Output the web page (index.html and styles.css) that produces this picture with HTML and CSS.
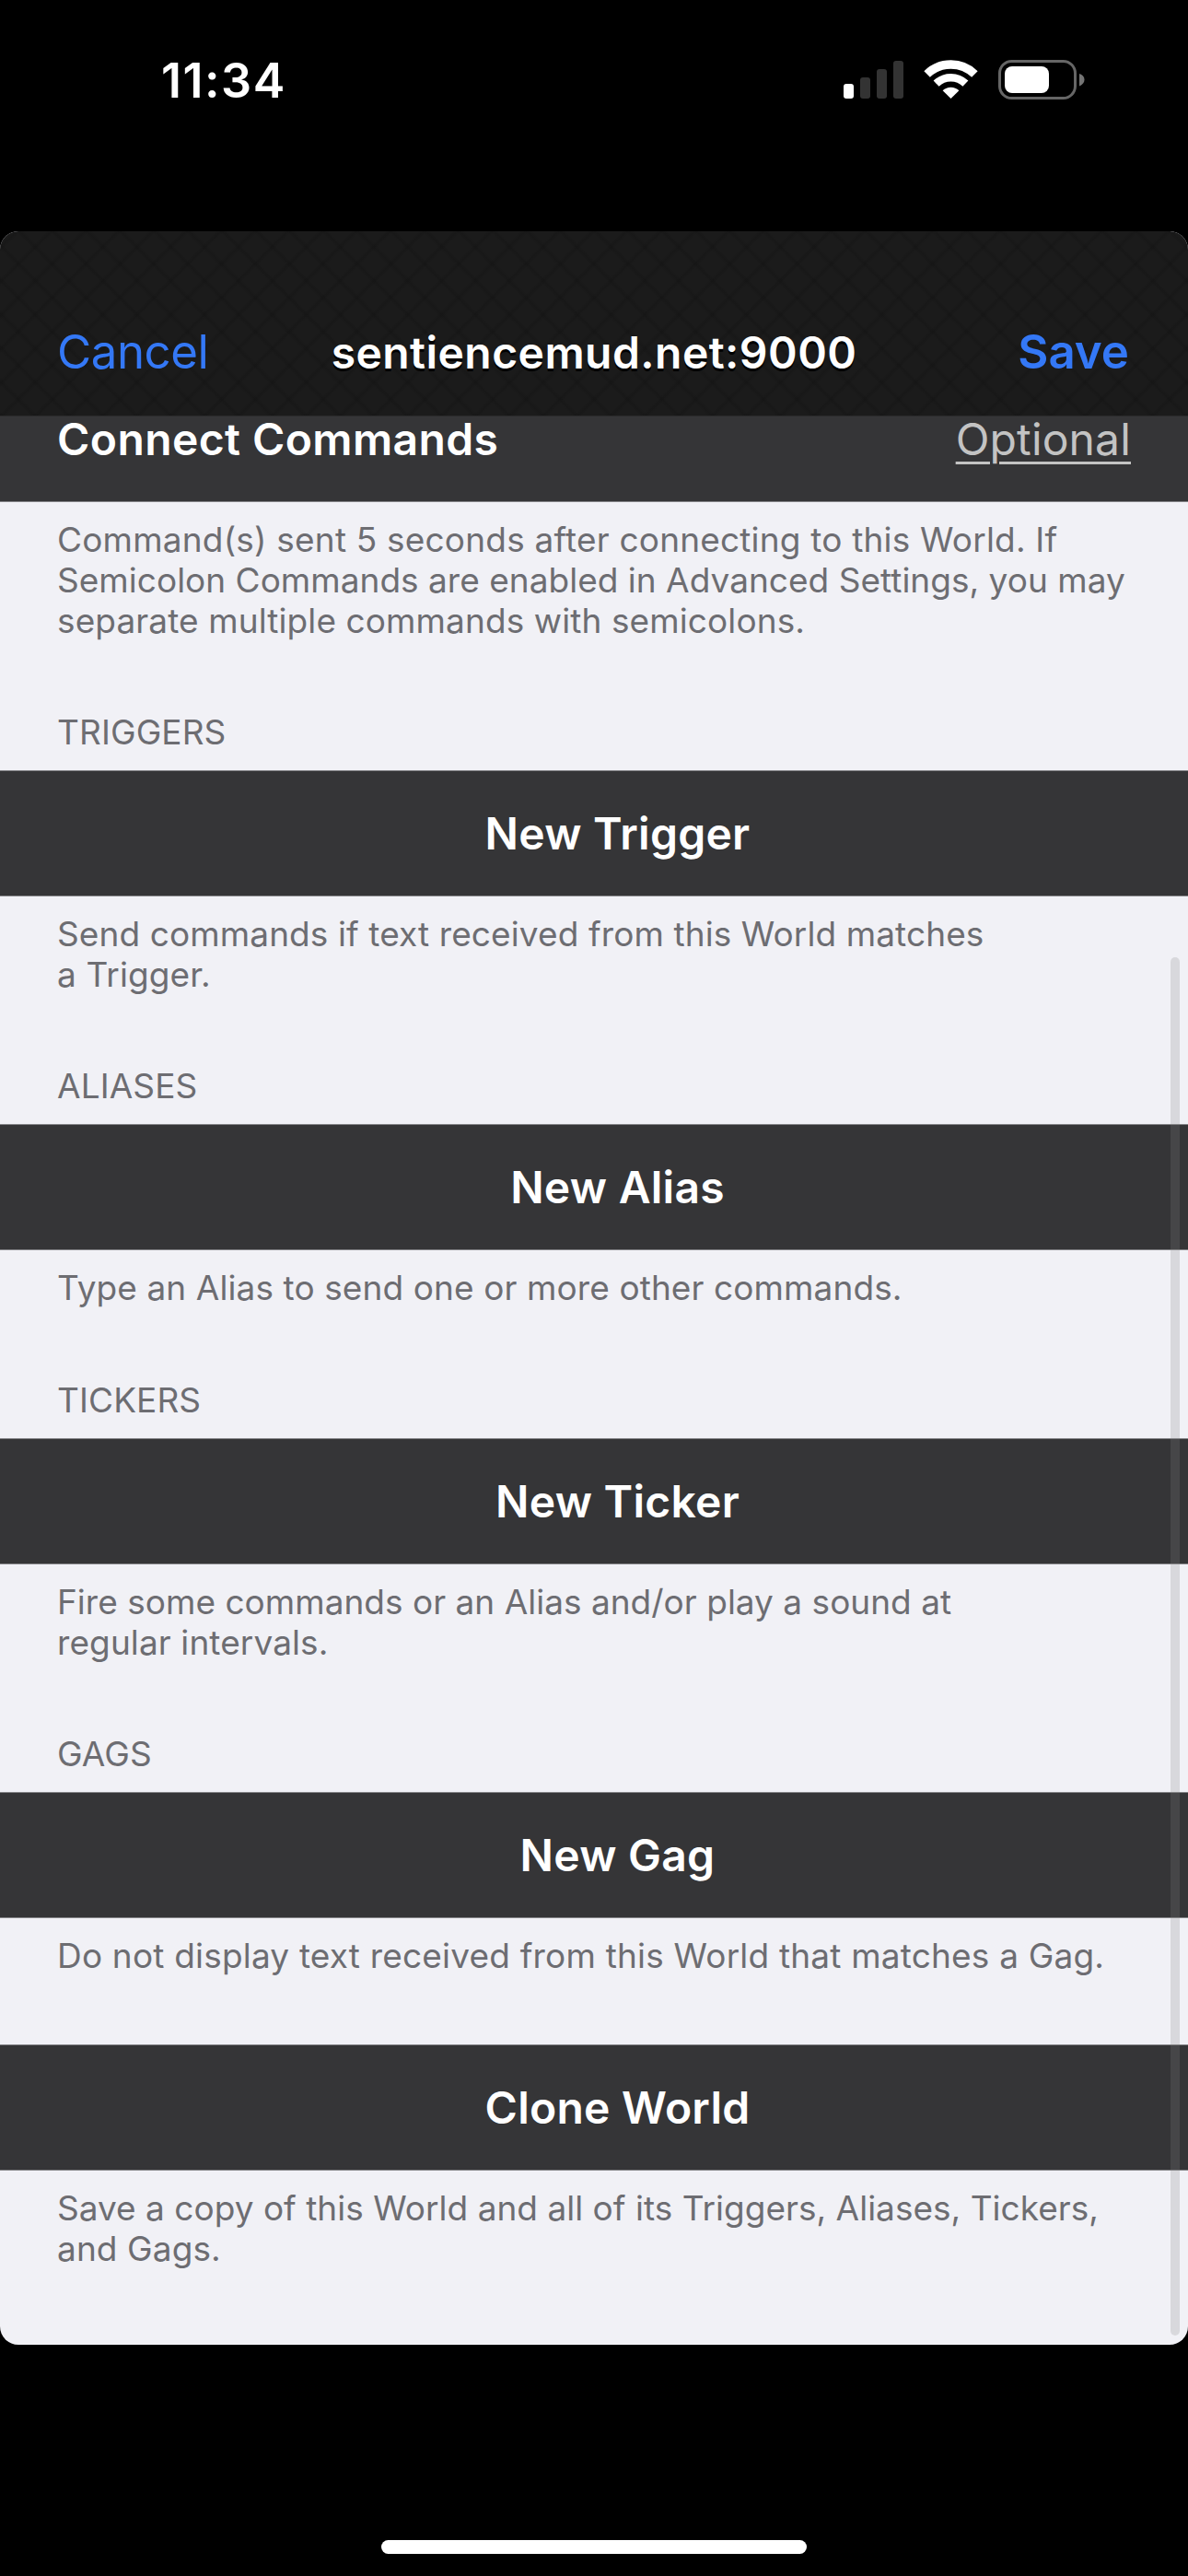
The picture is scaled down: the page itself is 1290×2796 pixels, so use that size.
FILE: index.html
```html
<!DOCTYPE html>
<html lang="en">
<head>
<meta charset="utf-8">
<title>sentiencemud.net:9000</title>
<link rel="stylesheet" href="styles.css">
</head>
<body>
<div class="status">
  <span class="time">11:34</span>
  <svg class="status-icons" width="264" height="45" viewBox="915 64 264 45">
    <rect x="916" y="91" width="11" height="16" rx="3" fill="#fff"/>
    <rect x="934" y="84" width="11" height="23" rx="3" fill="#333"/>
    <rect x="952" y="75" width="11" height="32" rx="3" fill="#333"/>
    <rect x="970" y="66" width="11" height="41" rx="3" fill="#333"/>
    <g fill="none" stroke="#fff">
      <path d="M1006.6 80.5A37.2 37.2 0 0 1 1058.4 80.5" stroke-width="9.3"/>
      <path d="M1016.6 90.7A22.8 22.8 0 0 1 1048.4 90.7" stroke-width="8.6"/>
    </g>
    <path d="M1032.5 107L1023.6 98.2A13 13 0 0 1 1041.4 98.2Z" fill="#fff"/>
    <rect x="1085.5" y="66.5" width="82" height="40" rx="13" fill="none" stroke="#666" stroke-width="3"/>
    <rect x="1091" y="72" width="48" height="29" rx="8" fill="#fff"/>
    <path d="M1172 80C1175.500 81 1177.500 83.500 1177.500 86.500S1175.500 92 1172 93.500Z" fill="#747474"/>
  </svg>
</div>
<div class="sheet">
  <header class="navbar">
    <span class="cancel">Cancel</span>
    <h1 class="title">sentiencemud.net:9000</h1>
    <span class="save">Save</span>
  </header>
  <main class="list">
    <div class="row row-field">
      <span class="label">Connect Commands</span>
      <span class="placeholder">Optional</span>
    </div>
    <section class="between">
      <p class="note"><span class="wide">Command(s) sent 5 seconds after connecting to this World. If</span><br><span class="tight">Semicolon Commands are enabled in Advanced Settings, you may</span><br>separate multiple commands with semicolons.</p>
      <h2 class="heading">TRIGGERS</h2>
    </section>
    <div class="row row-button">New Trigger</div>
    <section class="between">
      <p class="note">Send commands if text received from this World matches<br>a Trigger.</p>
      <h2 class="heading">ALIASES</h2>
    </section>
    <div class="row row-button">New Alias</div>
    <section class="between">
      <p class="note">Type an Alias to send one or more other commands.</p>
      <h2 class="heading">TICKERS</h2>
    </section>
    <div class="row row-button">New Ticker</div>
    <section class="between">
      <p class="note"><span class="tight">Fire some commands or an Alias and/or play a sound at</span><br>regular intervals.</p>
      <h2 class="heading">GAGS</h2>
    </section>
    <div class="row row-button">New Gag</div>
    <section class="between">
      <p class="note wide">Do not display text received from this World that matches a Gag.</p>
    </section>
    <div class="row row-button">Clone World</div>
    <section class="between">
      <p class="note"><span class="tight">Save a copy of this World and all of its Triggers, Aliases, Tickers,</span><br>and Gags.</p>
    </section>
  </main>
  <div class="scrollbar"></div>
</div>
<div class="home-bar"></div>
</body>
</html>
```
FILE: styles.css
```css
* { box-sizing: border-box; }

body {
  margin: 0;
  height: 2796px;
  display: flex;
  flex-direction: column;
  background: #000;
  color: #fff;
  font-family: Inter, "Liberation Sans", sans-serif;
  overflow: hidden;
}

h1, h2, p { margin: 0; font-weight: 400; }

.status {
  flex: none;
  height: 251px;
  padding: 56px 111px 0 175px;
  display: flex;
  justify-content: space-between;
  align-items: flex-start;
}

.time {
  font-size: 52px;
  line-height: 63px;
  font-weight: 600;
  letter-spacing: 1.5px;
}

.status-icons { margin-top: 8px; }

.sheet {
  position: relative;
  flex: none;
  height: 2294px;
  border-radius: 20px;
  overflow: hidden;
  background: #f1f1f6;
}

.navbar {
  height: 201px;
  padding: 61px 64px 0 62px;
  display: grid;
  grid-template-columns: 1fr auto 1fr;
  align-items: center;
  border-bottom: 1px solid #2a2a2b;
  background:
    repeating-linear-gradient(45deg, rgba(0, 0, 0, 0.1) 0 1px, transparent 4px 23px, rgba(0, 0, 0, 0.1) 26px),
    repeating-linear-gradient(-45deg, rgba(0, 0, 0, 0.1) 0 1px, transparent 4px 23px, rgba(0, 0, 0, 0.1) 26px),
    #1b1b1b;
}

.cancel, .save { font-size: 51px; line-height: 62px; color: #3478f6; }
.cancel { letter-spacing: -0.5px; }
.save { justify-self: end; font-weight: 600; }

.title {
  padding: 3px 0 0 2px;
  font-size: 48px;
  line-height: 58px;
  font-weight: 600;
  letter-spacing: 0.45px;
  text-shadow: 0 3px 0 #000;
}

.list {
  display: grid;
  grid-template-rows: 93px 291px 137px 247px 137px 204px 137px 247px 137px 137px 137px 189px;
}

.row {
  background: #353537;
  border: solid #838386;
  border-width: 1px 0;
  font-size: 48px;
  line-height: 135px;
  letter-spacing: 0.25px;
}

.row-field {
  display: flex;
  justify-content: space-between;
  align-items: flex-start;
  padding: 0 62px;
  border-top: 0;
  line-height: 50px;
}

.label { font-weight: 600; letter-spacing: 0.4px; }

.placeholder {
  color: #c3c3c3;
  letter-spacing: 0.15px;
  text-decoration: underline;
  text-decoration-thickness: 3px;
  text-underline-offset: 7px;
}

.row-button {
  padding-left: 51px;
  font-weight: 600;
  text-align: center;
}

.between {
  display: flex;
  flex-direction: column;
  justify-content: space-between;
  padding: 19px 62px;
  color: #6d6d72;
  font-size: 37px;
  line-height: 44px;
  letter-spacing: 0.1px;
}

.heading { font-size: inherit; }
.note { white-space: nowrap; }
.wide { letter-spacing: 0.19px; }
.tight { letter-spacing: 0.02px; }

.scrollbar {
  position: absolute;
  top: 788px;
  right: 9px;
  width: 10px;
  height: 1496px;
  border-radius: 5px;
  background: rgba(132, 132, 134, 0.228);
}

.home-bar {
  flex: none;
  align-self: center;
  width: 462px;
  height: 15px;
  margin-top: 212px;
  border-radius: 8px;
  background: #fff;
}
```
